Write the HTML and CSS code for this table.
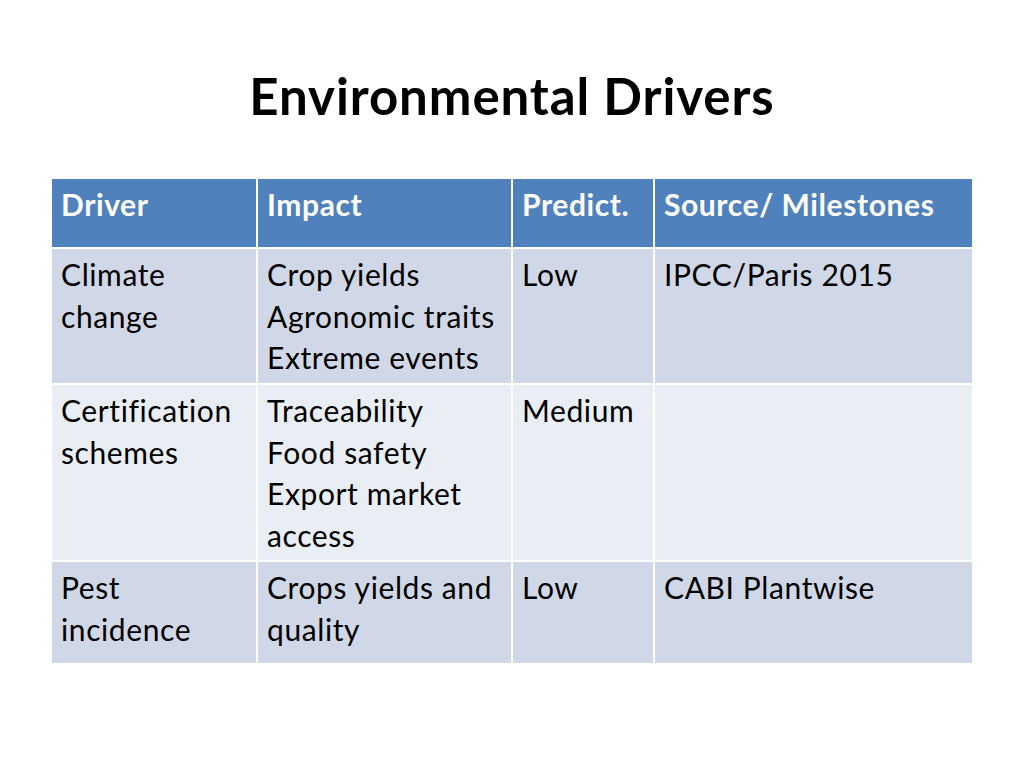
FILE: index.html
```html
<!DOCTYPE html>
<html>
<head>
<meta charset="utf-8">
<link rel="stylesheet" href="styles.css">
</head>
<body>
<div class="slide">
  <h1 class="title">Environmental Drivers</h1>
  <table class="drivers">
    <colgroup>
      <col class="c1"><col class="c2"><col class="c3"><col class="c4">
    </colgroup>
    <thead>
      <tr class="head">
        <th>Driver</th><th>Impact</th><th>Predict.</th><th>Source/ Milestones</th>
      </tr>
    </thead>
    <tbody>
      <tr class="odd r1">
        <td>Climate change</td>
        <td>Crop yields<br>Agronomic traits<br>Extreme events</td>
        <td>Low</td>
        <td>IPCC/Paris 2015</td>
      </tr>
      <tr class="even r2">
        <td>Certification schemes</td>
        <td>Traceability<br>Food safety<br>Export market access</td>
        <td>Medium</td>
        <td></td>
      </tr>
      <tr class="odd r3">
        <td>Pest incidence</td>
        <td>Crops yields and quality</td>
        <td>Low</td>
        <td>CABI Plantwise</td>
      </tr>
    </tbody>
  </table>
</div>
</body>
</html>
```
FILE: styles.css
```css
html, body {
  margin: 0;
  padding: 0;
  background: #ffffff;
}
.slide {
  width: 1024px;
  height: 768px;
  font-family: Lato, "Open Sans", sans-serif;
  color: #000;
}
.title {
  margin: 0 0 51px 0;
  padding-top: 65px;
  text-align: center;
  font-size: 51px;
  letter-spacing: 0.9px;
  line-height: normal;
  font-weight: 700;
}
.drivers {
  margin-left: 50px;
  width: 924px;
  table-layout: fixed;
  border-collapse: separate;
  border-spacing: 2px;
  font-size: 30px;
  letter-spacing: 0.6px;
  line-height: 41.7px;
}
.c1 { width: 204px; }
.c2 { width: 253px; }
.c3 { width: 140px; }
.c4 { width: 317px; }
.drivers th, .drivers td {
  padding: 5px 8px 0 9px;
  text-align: left;
  vertical-align: top;
  white-space: normal;
}
.drivers th {
  font-weight: 700;
  color: #ffffff;
  background: #4f81bd;
}
.head { height: 68px; }
.r1 { height: 134px; }
.r2 { height: 175px; }
.r3 { height: 101px; }
.odd td { background: #d0d8e8; }
.even td { background: #e9edf4; }
```
